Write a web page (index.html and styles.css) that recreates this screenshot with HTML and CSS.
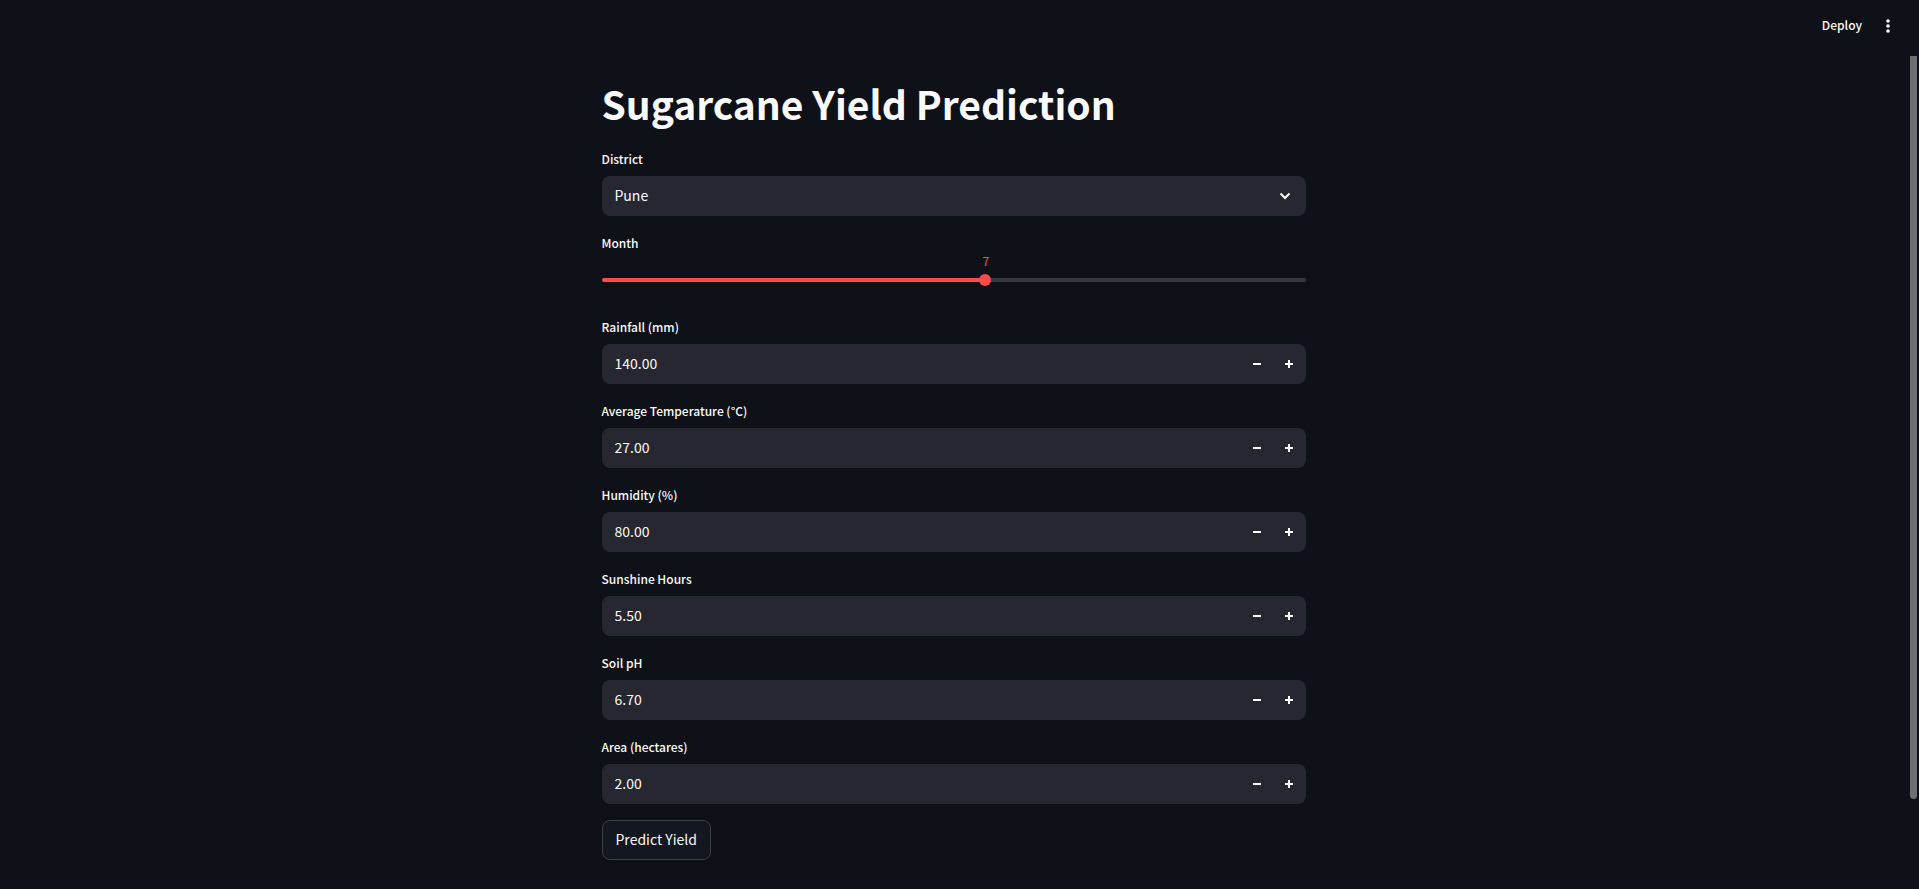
FILE: index.html
```html
<!DOCTYPE html>
<html lang="en">
<head>
<meta charset="utf-8">
<meta name="viewport" content="width=device-width, initial-scale=1">
<title>Sugarcane Yield Prediction</title>
<link rel="stylesheet" href="styles.css">
</head>
<body>
<svg class="sprite" aria-hidden="true">
  <symbol id="minus" viewBox="0 0 8 8"><path d="M0 3h8v2H0z"/></symbol>
  <symbol id="plus" viewBox="0 0 8 8"><path d="M3 0h2v3h3v2H5v3H3V5H0V3h3z"/></symbol>
</svg>
<header class="toolbar">
  <button class="deploy" type="button">Deploy</button>
  <button class="menu" type="button" aria-label="Main menu">
    <svg width="4" height="14" viewBox="0 0 4 14"><circle cx="2" cy="2" r="1.8"/><circle cx="2" cy="7" r="1.8"/><circle cx="2" cy="12" r="1.8"/></svg>
  </button>
</header>
<main class="page">
  <form class="form">
    <h1 class="title">Sugarcane Yield Prediction</h1>
    <div class="field">
      <label class="label" for="district">District</label>
      <div class="select-wrap">
        <select class="select" id="district"><option>Pune</option></select>
        <svg class="chevron" width="12" height="8" viewBox="0 0 12 8"><path d="M1.5 1.5L6 6l4.500-4.500"/></svg>
      </div>
    </div>
    <div class="field">
      <label class="label" for="month">Month</label>
      <div class="slider">
        <output class="value" for="month" style="left: 54.6%">7</output>
        <input class="range" id="month" type="range" min="1" max="12" value="7">
      </div>
    </div>
    <div class="field">
      <label class="label" for="rain">Rainfall (mm)</label>
      <div class="number">
        <input class="input" id="rain" type="text" inputmode="decimal" value="140.00">
        <button class="step" type="button" aria-label="Decrease rainfall"><svg width="8" height="8"><use href="#minus"/></svg></button>
        <button class="step" type="button" aria-label="Increase rainfall"><svg width="8" height="8"><use href="#plus"/></svg></button>
      </div>
    </div>
    <div class="field">
      <label class="label" for="temp">Average Temperature (°C)</label>
      <div class="number">
        <input class="input" id="temp" type="text" inputmode="decimal" value="27.00">
        <button class="step" type="button" aria-label="Decrease temperature"><svg width="8" height="8"><use href="#minus"/></svg></button>
        <button class="step" type="button" aria-label="Increase temperature"><svg width="8" height="8"><use href="#plus"/></svg></button>
      </div>
    </div>
    <div class="field">
      <label class="label" for="humidity">Humidity (%)</label>
      <div class="number">
        <input class="input" id="humidity" type="text" inputmode="decimal" value="80.00">
        <button class="step" type="button" aria-label="Decrease humidity"><svg width="8" height="8"><use href="#minus"/></svg></button>
        <button class="step" type="button" aria-label="Increase humidity"><svg width="8" height="8"><use href="#plus"/></svg></button>
      </div>
    </div>
    <div class="field">
      <label class="label" for="sun">Sunshine Hours</label>
      <div class="number">
        <input class="input" id="sun" type="text" inputmode="decimal" value="5.50">
        <button class="step" type="button" aria-label="Decrease sunshine hours"><svg width="8" height="8"><use href="#minus"/></svg></button>
        <button class="step" type="button" aria-label="Increase sunshine hours"><svg width="8" height="8"><use href="#plus"/></svg></button>
      </div>
    </div>
    <div class="field">
      <label class="label" for="ph">Soil pH</label>
      <div class="number">
        <input class="input" id="ph" type="text" inputmode="decimal" value="6.70">
        <button class="step" type="button" aria-label="Decrease soil pH"><svg width="8" height="8"><use href="#minus"/></svg></button>
        <button class="step" type="button" aria-label="Increase soil pH"><svg width="8" height="8"><use href="#plus"/></svg></button>
      </div>
    </div>
    <div class="field">
      <label class="label" for="area">Area (hectares)</label>
      <div class="number">
        <input class="input" id="area" type="text" inputmode="decimal" value="2.00">
        <button class="step" type="button" aria-label="Decrease area"><svg width="8" height="8"><use href="#minus"/></svg></button>
        <button class="step" type="button" aria-label="Increase area"><svg width="8" height="8"><use href="#plus"/></svg></button>
      </div>
    </div>
    <button class="submit" type="button">Predict Yield</button>
  </form>
</main>
<div class="scrollbar" aria-hidden="true"></div>
</body>
</html>
```
FILE: styles.css
```css
*, *::before, *::after { box-sizing: border-box; }

body {
  margin: 0;
  min-height: 100vh;
  background: #0e1117;
  color: #fafafa;
  font: 400 14px/24px "Source Sans Pro", "Noto Sans CJK SC", "Noto Sans", sans-serif;
}

button, input, select {
  font: inherit;
  color: inherit;
  margin: 0;
  padding: 0;
  border: 0;
  background: none;
}

svg { display: block; fill: currentColor; }
.sprite { position: absolute; width: 0; height: 0; }

.toolbar {
  display: flex;
  justify-content: flex-end;
  align-items: center;
  gap: 15px;
  height: 56px;
  padding: 0 20px 4px 0;
}
.deploy { padding-bottom: 2px; font-size: 12px; font-weight: 500; }
.menu {
  display: flex;
  align-items: center;
  justify-content: center;
  width: 22px;
  height: 24px;
}

.page { padding: 19px 28px 28px 16px; }
.form {
  display: flex;
  flex-direction: column;
  align-items: stretch;
  gap: 16px;
  max-width: 704px;
  margin: 0 auto;
}
.title { margin: 0; padding-bottom: 1px; font-size: 39px; line-height: 56px; font-weight: 700; }

.field { display: flex; flex-direction: column; gap: 4px; }
.label { padding-bottom: 2px; font-size: 12px; font-weight: 500; line-height: 22px; }

.select-wrap { display: grid; align-items: center; }
.select-wrap > * { grid-area: 1 / 1; }
.select {
  appearance: none;
  width: 100%;
  height: 40px;
  padding: 0 13px 2px;
  border-radius: 8px;
  background: #262730;
}
.chevron {
  justify-self: end;
  margin-right: 15px;
  fill: none;
  stroke: currentColor;
  stroke-width: 2;
  pointer-events: none;
}

.slider { position: relative; height: 40px; padding-top: 14px; }
.value {
  position: absolute;
  top: -7px;
  transform: translateX(-50%);
  color: #ff4b4b;
  font-size: 12px;
  line-height: 16px;
}
.range {
  appearance: none;
  display: block;
  width: 100%;
  height: 12px;
  background: none;
}
.range::-webkit-slider-runnable-track {
  height: 4px;
  border-radius: 2px;
  background: linear-gradient(to right, #ff4b4b 54.5%, #363941 54.5%);
}
.range::-webkit-slider-thumb {
  appearance: none;
  width: 12px;
  height: 12px;
  margin-top: -4px;
  border-radius: 50%;
  background: #ff4b4b;
}

.number {
  display: flex;
  height: 40px;
  padding-right: 1px;
  overflow: hidden;
  border-radius: 8px;
  background: #262730;
}
.input { flex: 1; min-width: 0; padding: 0 13px 2px; }
.step { display: flex; align-items: center; justify-content: center; width: 32px; }

.submit {
  align-self: flex-start;
  height: 40px;
  padding: 0 13px 2px;
  border: 1px solid #3d4046;
  border-radius: 8px;
  background: #131720;
}

.scrollbar {
  position: absolute;
  top: 56px;
  right: 2px;
  bottom: 90px;
  width: 7px;
  border-radius: 0 0 4px 4px;
  background: #6e6f73;
}
```
